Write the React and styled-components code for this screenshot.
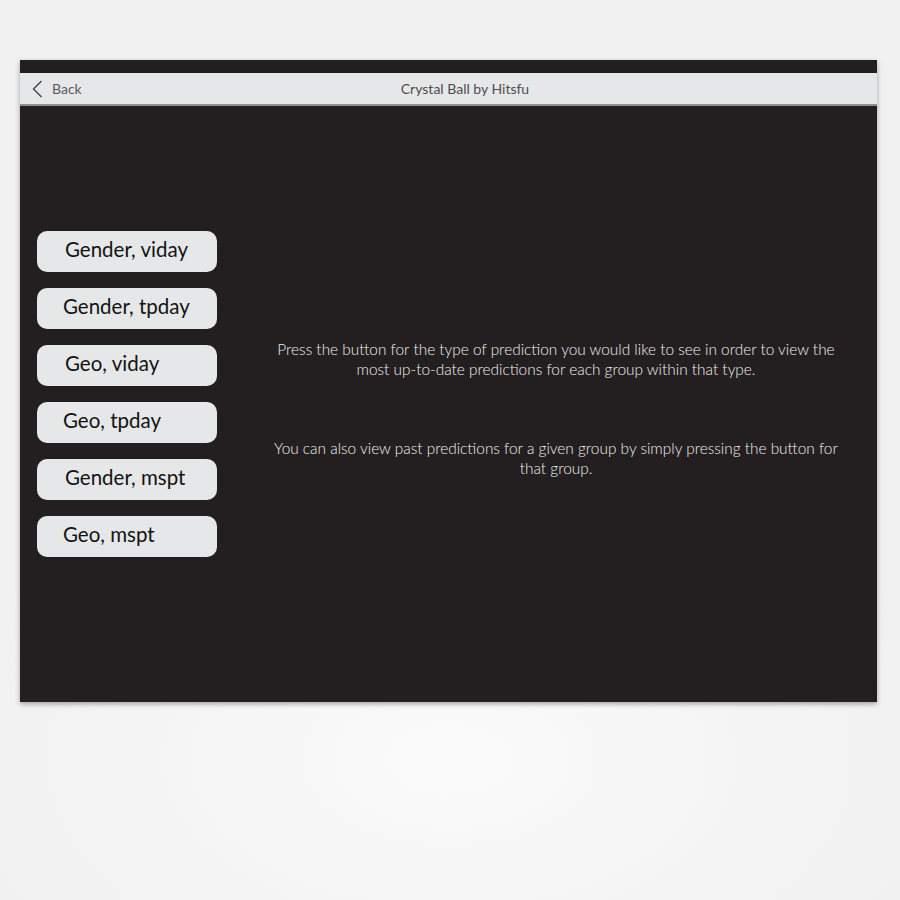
import React from 'react'
import styled, { createGlobalStyle } from 'styled-components'

const GlobalStyle = createGlobalStyle`
  html, body {
    margin: 0;
    padding: 0;
  }
  body {
    min-height: 900px;
    background: radial-gradient(ellipse 520px 300px at 450px 760px, #fbfbfb 0%, #f4f4f4 60%, #f1f1f1 100%);
    font-family: Lato, "Liberation Sans", sans-serif;
  }
`

const Page = styled.div`
  padding: 60px 23px 0 20px;
`

const Frame = styled.div`
  width: 857px;
  height: 642px;
  background: #231f20;
  box-shadow: 0 2px 5px rgba(0, 0, 0, 0.35);
  display: flex;
  flex-direction: column;
  padding-top: 13px;
  box-sizing: border-box;
`

const Header = styled.div`
  height: 31px;
  background: #e6e7e8;
  border-bottom: 2px solid #8f8f91;
  display: flex;
  align-items: center;
  color: #555;
  font-size: 14px;
`

const BackButton = styled.div`
  display: flex;
  align-items: center;
  gap: 9px;
  width: 50px;
  padding-left: 12px;
  color: #5a5a5c;
`

const Title = styled.div`
  flex: 1;
  text-align: center;
  padding-right: 29px;
  color: #4d4d4f;
`

const Body = styled.div`
  flex: 1;
  display: flex;
  padding: 125px 0 0 17px;
`

const ButtonList = styled.div`
  display: flex;
  flex-direction: column;
  gap: 16px;
  width: 180px;
  flex-shrink: 0;
`

const GroupButton = styled.button`
  height: 41px;
  border: none;
  border-radius: 10px;
  background: #e6e7e8;
  color: #131313;
  font-family: Lato, "Liberation Sans", sans-serif;
  font-size: 20.5px;
  text-align: left;
  padding: 0 0 5px ${p => p.$indent}px;
  cursor: pointer;
`

const Info = styled.div`
  flex: 1;
  display: flex;
  flex-direction: column;
  align-items: center;
  gap: 59px;
  padding: 108px 20px 0 38px;
`

const Paragraph = styled.p`
  margin: 0;
  width: 578px;
  text-align: center;
  color: #f0f0f0;
  font-weight: 300;
  font-size: 15.4px;
  line-height: 20px;
`

const groups = [
  { label: 'Gender, viday', indent: 28 },
  { label: 'Gender, tpday', indent: 26 },
  { label: 'Geo, viday', indent: 28 },
  { label: 'Geo, tpday', indent: 26 },
  { label: 'Gender, mspt', indent: 28 },
  { label: 'Geo, mspt', indent: 26 },
]

const Chevron = () => (
  <svg width='11' height='18' viewBox='0 0 11 18'>
    <polyline points='9.5,1 1.5,9 9.5,17' fill='none' stroke='#444' strokeWidth='1.4' />
  </svg>
)

const App = () => (
  <Page>
    <GlobalStyle />
    <Frame>
      <Header>
        <BackButton>
          <Chevron />
          <span>Back</span>
        </BackButton>
        <Title>Crystal Ball by Hitsfu</Title>
      </Header>
      <Body>
        <ButtonList>
          {groups.map(g => (
            <GroupButton key={g.label} $indent={g.indent}>{g.label}</GroupButton>
          ))}
        </ButtonList>
        <Info>
          <Paragraph>
            Press the button for the type of prediction you would like to see in order to view the
            most up-to-date predictions for each group within that type.
          </Paragraph>
          <Paragraph>
            You can also view past predictions for a given group by simply pressing the button for
            that group.
          </Paragraph>
        </Info>
      </Body>
    </Frame>
  </Page>
)

export default App
